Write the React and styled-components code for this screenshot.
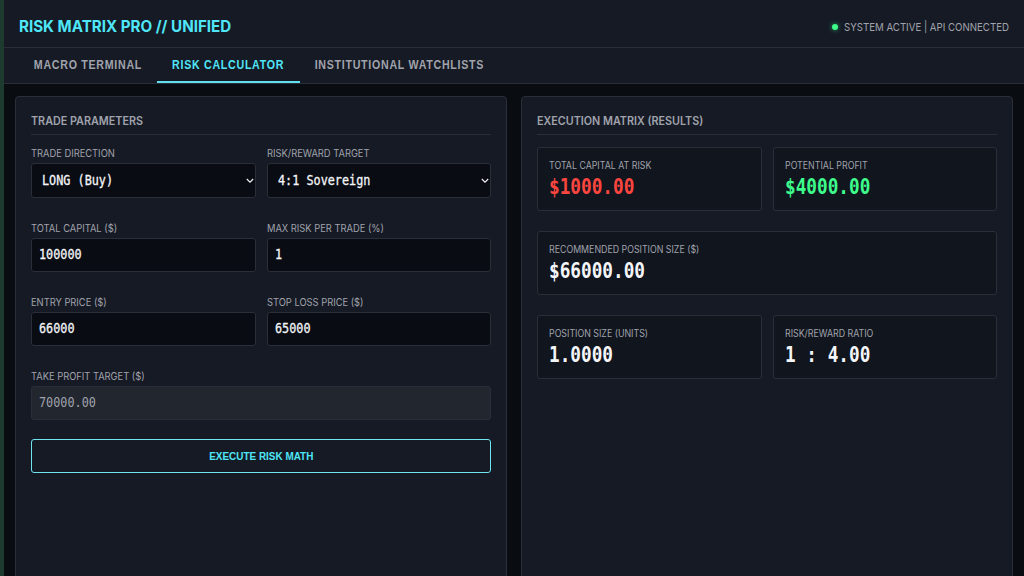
import React from "react";
import styled, { createGlobalStyle } from "styled-components";

const c = {
  bg: "#090c11",
  panel: "#161a25",
  card: "#11151e",
  line: "#2a2e39",
  muted: "#a0a3ac",
  cyan: "#4fe6f7",
  green: "#3dfc8c",
  red: "#fb4640",
  white: "#f4f5f9",
};
const mono = `"DejaVu Sans Mono", monospace`;

const Global = createGlobalStyle`
  * { box-sizing: border-box; }
  body { margin: 0; background: ${c.bg}; overflow: hidden; font-family: Inter, sans-serif; }
`;

const Page = styled.div`
  height: 576px;
  display: flex;
  flex-direction: column;
  border-left: 4px solid #1d3a2f;
  overflow: hidden;
`;
const Condensed = styled.span`
  display: inline-block;
  white-space: pre;
  transform: scaleX(${(p) => p.$x});
  transform-origin: ${(p) => p.$from || "left"};
`;
const Header = styled.header`
  flex: none;
  height: 48px;
  display: flex;
  align-items: center;
  justify-content: space-between;
  padding: 6px 15px 0 15px;
  background: ${c.panel};
  border-bottom: 1px solid ${c.line};
`;
const Brand = styled.h1`
  margin: 0;
  font-size: 15.5px;
  font-weight: 700;
  color: ${c.cyan};
  white-space: nowrap;
`;
const Status = styled.div`
  width: 177px;
  display: flex;
  align-items: center;
  gap: 6px;
  font-size: 11px;
  color: ${c.muted};
  white-space: nowrap;
`;
const Dot = styled.span`
  flex: none;
  width: 6px;
  height: 6px;
  border-radius: 50%;
  background: ${c.green};
  box-shadow: 0 0 5px rgba(61, 252, 140, 0.6);
`;
const Tabs = styled.nav`
  flex: none;
  height: 36px;
  display: flex;
  padding-left: 15px;
  background: ${c.panel};
  border-bottom: 1px solid ${c.line};
`;
const Tab = styled.button`
  width: ${(p) => p.$w}px;
  height: 35px;
  display: flex;
  align-items: center;
  justify-content: center;
  padding: 0;
  border: 0;
  border-bottom: 2px solid ${(p) => (p.$active ? "#62dfee" : "transparent")};
  background: none;
  color: ${(p) => (p.$active ? c.cyan : c.muted)};
  font: 700 12px "Liberation Sans", sans-serif;
  letter-spacing: 0.8px;
  white-space: nowrap;
`;
const Main = styled.main`
  flex: 1;
  display: grid;
  grid-template-columns: 492px 492px;
  gap: 14px;
  padding: 12px 11px 0 11px;
`;
const Panel = styled.section`
  height: 520px;
  padding: 15px;
  background: ${c.panel};
  border: 1px solid ${c.line};
  border-radius: 4px;
`;
const PanelTitle = styled.h2`
  margin: 0 0 12px;
  height: 23px;
  line-height: 18px;
  border-bottom: 1px solid ${c.line};
  font-size: 11.6px;
  font-weight: 600;
  color: ${c.muted};
`;
const FormGrid = styled.div`
  display: grid;
  grid-template-columns: 1fr 1fr;
  column-gap: 11px;
  row-gap: 24px;
`;
const Field = styled.label`
  display: flex;
  flex-direction: column;
  gap: 4px;
  grid-column: ${(p) => (p.$wide ? "1 / -1" : "auto")};
`;
const Caption = styled.span`
  height: 12px;
  line-height: 13px;
  font-size: 10.4px;
  color: ${c.muted};
  white-space: nowrap;
`;
const InputBox = styled.div`
  height: 34px;
  padding: 0 7px;
  border: 1px solid ${c.line};
  border-radius: 3px;
  overflow: hidden;
  background: ${(p) => (p.$locked ? "#22262f" : "#090c12")};
`;
const Input = styled.input`
  display: block;
  width: 120%;
  height: 32px;
  padding: 0 0 3px;
  border: 0;
  outline: 0;
  background: none;
  color: ${(p) => (p.readOnly ? c.muted : c.white)};
  font: 400 14.2px ${mono};
  -webkit-text-stroke: ${(p) => (p.readOnly ? 0 : 0.3)}px;
  transform: scaleX(0.832);
  transform-origin: left;
`;
const Select = styled.div`
  height: 35px;
  display: flex;
  align-items: center;
  justify-content: space-between;
  padding: 0 1px 0 10px;
  border: 1px solid ${c.line};
  border-radius: 3px;
  background: #090c12;
  color: ${c.white};
  font: 400 14.2px ${mono};
  -webkit-text-stroke: 0.3px;
`;
const SelectText = styled(Condensed)`
  padding-bottom: 2px;
`;
const Execute = styled.button`
  width: 100%;
  height: 34px;
  margin-top: 19px;
  padding: 0 0 1px;
  border: 1px solid #6fe3ee;
  border-radius: 3px;
  background: transparent;
  color: ${c.cyan};
  font: 700 11.5px "Liberation Sans", sans-serif;
`;
const Results = styled.div`
  display: grid;
  grid-template-columns: 1fr 1fr;
  column-gap: 11px;
  row-gap: 20px;
`;
const Card = styled.div`
  height: 64px;
  padding: 11px;
  background: ${c.card};
  border: 1px solid ${c.line};
  border-radius: 3px;
  grid-column: ${(p) => (p.$wide ? "1 / -1" : "auto")};
`;
const CardLabel = styled.div`
  height: 14px;
  line-height: 14px;
  font-size: 9.7px;
  color: ${c.muted};
`;
const Value = styled.div`
  height: 28px;
  font: 700 21.3px/28px ${mono};
  color: ${(p) => p.$color || c.white};
`;

const Chevron = () => (
  <svg width="8" height="6" viewBox="0 0 8 6" fill="none" stroke="#f4f5f9" strokeWidth="1.1">
    <path d="M0.8 1 4 4.2 7.2 1" />
  </svg>
);

const NavTab = ({ label, width, active }) => (
  <Tab $w={width} $active={active}>
    <Condensed $x={0.888} $from="center">{label}</Condensed>
  </Tab>
);
const Text = ({ label, wide, ...rest }) => (
  <Field $wide={wide}>
    <Caption>
      <Condensed $x={0.898}>{label}</Condensed>
    </Caption>
    <InputBox $locked={rest.readOnly}>
      <Input {...rest} />
    </InputBox>
  </Field>
);
const Choice = ({ label, value }) => (
  <Field as="div">
    <Caption>
      <Condensed $x={0.898}>{label}</Condensed>
    </Caption>
    <Select>
      <SelectText $x={0.832}>{value}</SelectText>
      <Chevron />
    </Select>
  </Field>
);
const Result = ({ label, value, color, wide }) => (
  <Card $wide={wide}>
    <CardLabel>
      <Condensed $x={0.91}>{label}</Condensed>
    </CardLabel>
    <Value $color={color}>
      <Condensed $x={0.832}>{value}</Condensed>
    </Value>
  </Card>
);

export default function App() {
  return (
    <Page>
      <Global />
      <Header>
        <Brand>
          <Condensed $x={0.977}>RISK MATRIX PRO // UNIFIED</Condensed>
        </Brand>
        <Status>
          <Dot />
          <Condensed $x={0.879}>SYSTEM ACTIVE | API CONNECTED</Condensed>
        </Status>
      </Header>
      <Tabs>
        <NavTab width={138} label="MACRO TERMINAL" />
        <NavTab width={143} label="RISK CALCULATOR" active />
        <NavTab width={198} label="INSTITUTIONAL WATCHLISTS" />
      </Tabs>
      <Main>
        <Panel>
          <PanelTitle>
            <Condensed $x={0.93}>TRADE PARAMETERS</Condensed>
          </PanelTitle>
          <FormGrid>
            <Choice label="TRADE DIRECTION" value="LONG (Buy)" />
            <Choice label="RISK/REWARD TARGET" value="4:1 Sovereign" />
            <Text label="TOTAL CAPITAL ($)" defaultValue="100000" />
            <Text label="MAX RISK PER TRADE (%)" defaultValue="1" />
            <Text label="ENTRY PRICE ($)" defaultValue="66000" />
            <Text label="STOP LOSS PRICE ($)" defaultValue="65000" />
            <Text label="TAKE PROFIT TARGET ($)" value="70000.00" readOnly wide />
          </FormGrid>
          <Execute>
            <Condensed $x={0.864} $from="center">EXECUTE RISK MATH</Condensed>
          </Execute>
        </Panel>
        <Panel>
          <PanelTitle>
            <Condensed $x={0.93}>EXECUTION MATRIX (RESULTS)</Condensed>
          </PanelTitle>
          <Results>
            <Result label="TOTAL CAPITAL AT RISK" value="$1000.00" color={c.red} />
            <Result label="POTENTIAL PROFIT" value="$4000.00" color={c.green} />
            <Result label="RECOMMENDED POSITION SIZE ($)" value="$66000.00" wide />
            <Result label="POSITION SIZE (UNITS)" value="1.0000" />
            <Result label="RISK/REWARD RATIO" value="1 : 4.00" />
          </Results>
        </Panel>
      </Main>
    </Page>
  );
}
